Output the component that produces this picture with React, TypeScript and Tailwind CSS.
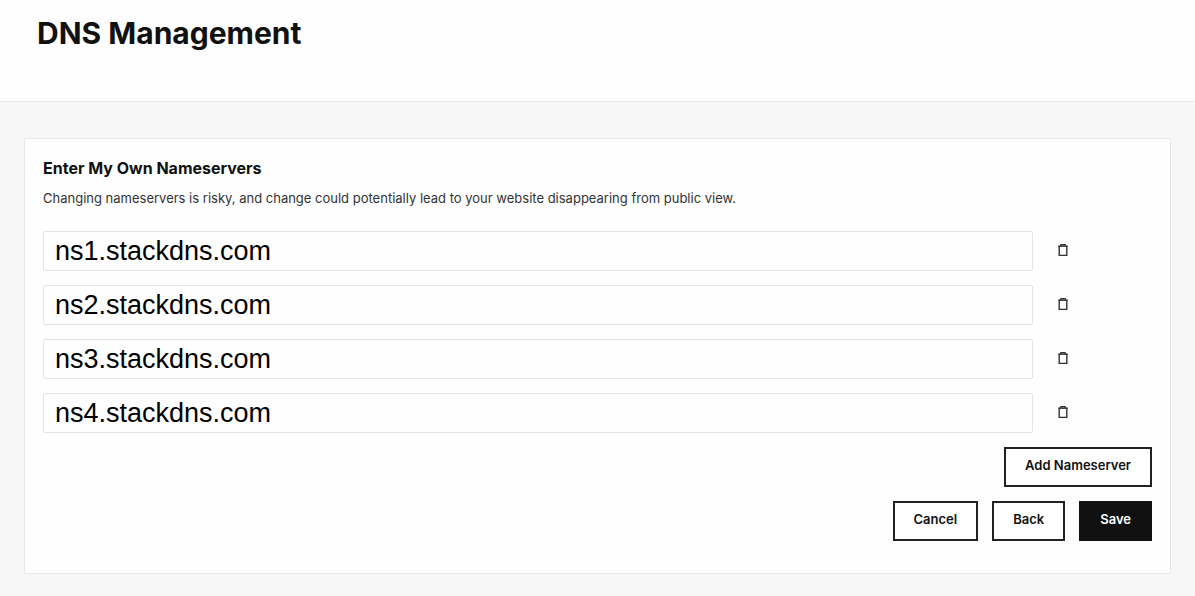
import { useState } from "react";

const INITIAL_NAMESERVERS = ["ns1.stackdns.com", "ns2.stackdns.com", "ns3.stackdns.com", "ns4.stackdns.com"];

const BUTTON = "h-10 border-2 px-[19px] pb-[2px] text-[13px] font-semibold";

function TrashIcon() {
  return (
    <svg width="12" height="14" viewBox="0 0 12 14" fill="none" stroke="#333" strokeWidth="1.4" aria-hidden="true">
      <path d="M2.2 3.4V12.4H9.8V3.4" />
      <path d="M1.2 3.2H10.8" />
      <path d="M3 3L4 1.7H8L9 3" />
    </svg>
  );
}

type NameserverRowProps = {
  index: number;
  value: string;
  onChange: (value: string) => void;
  onRemove: () => void;
};

function NameserverRow({ index, value, onChange, onRemove }: NameserverRowProps) {
  return (
    <div className="flex items-center">
      <input
        type="text"
        aria-label={`Nameserver ${index + 1}`}
        value={value}
        onChange={(event) => onChange(event.target.value)}
        className="h-10 min-w-0 flex-1 rounded-xs border border-[#e4e4e4] bg-[#fefefe] px-[11px] font-['Liberation_Sans',Arial,sans-serif] text-[27px] leading-8 text-black"
      />
      <div className="w-[119px] pl-[18px]">
        <button
          type="button"
          aria-label={`Delete nameserver ${index + 1}`}
          className="block px-[6px] pt-[5px] pb-[7px]"
          onClick={onRemove}
        >
          <TrashIcon />
        </button>
      </div>
    </div>
  );
}

export default function App() {
  const [nameservers, setNameservers] = useState(INITIAL_NAMESERVERS);

  return (
    <div className="min-h-screen bg-[#f7f7f7] pb-6 font-['Inter',sans-serif] text-[#111]">
      <header className="border-b border-[#e8e8e8] bg-[#fefefe] px-[37px] pt-[13px] pb-12">
        <h1 className="text-[30px] leading-10 font-bold">DNS Management</h1>
      </header>

      <main className="px-6 pt-9">
        <section className="rounded-xs border border-[#e6e6e6] bg-[#fefefe] px-[18px] pt-[17px] pb-8">
          <h2 className="text-[16px] leading-6 font-bold">Enter My Own Nameservers</h2>
          <p className="mt-2 text-[13px] leading-5 text-[#333]">
            Changing nameservers is risky, and change could potentially lead to your website disappearing from public
            view.
          </p>

          <form onSubmit={(event) => event.preventDefault()}>
            <div className="mt-[23px] grid gap-[14px]">
              {nameservers.map((value, index) => (
                <NameserverRow
                  key={index}
                  index={index}
                  value={value}
                  onChange={(next) => setNameservers(nameservers.map((item, i) => (i === index ? next : item)))}
                  onRemove={() => setNameservers(nameservers.filter((_, i) => i !== index))}
                />
              ))}
            </div>

            <div className="mt-[14px] flex justify-end">
              <button
                type="button"
                className={`${BUTTON} border-[#222] bg-white`}
                onClick={() => setNameservers([...nameservers, ""])}
              >
                Add Nameserver
              </button>
            </div>
            <div className="mt-[14px] flex justify-end gap-[14px]">
              <button type="button" className={`${BUTTON} border-[#222] bg-white`}>
                Cancel
              </button>
              <button type="button" className={`${BUTTON} border-[#222] bg-white`}>
                Back
              </button>
              <button type="submit" className={`${BUTTON} border-[#111] bg-[#111] text-white`}>
                Save
              </button>
            </div>
          </form>
        </section>
      </main>
    </div>
  );
}
